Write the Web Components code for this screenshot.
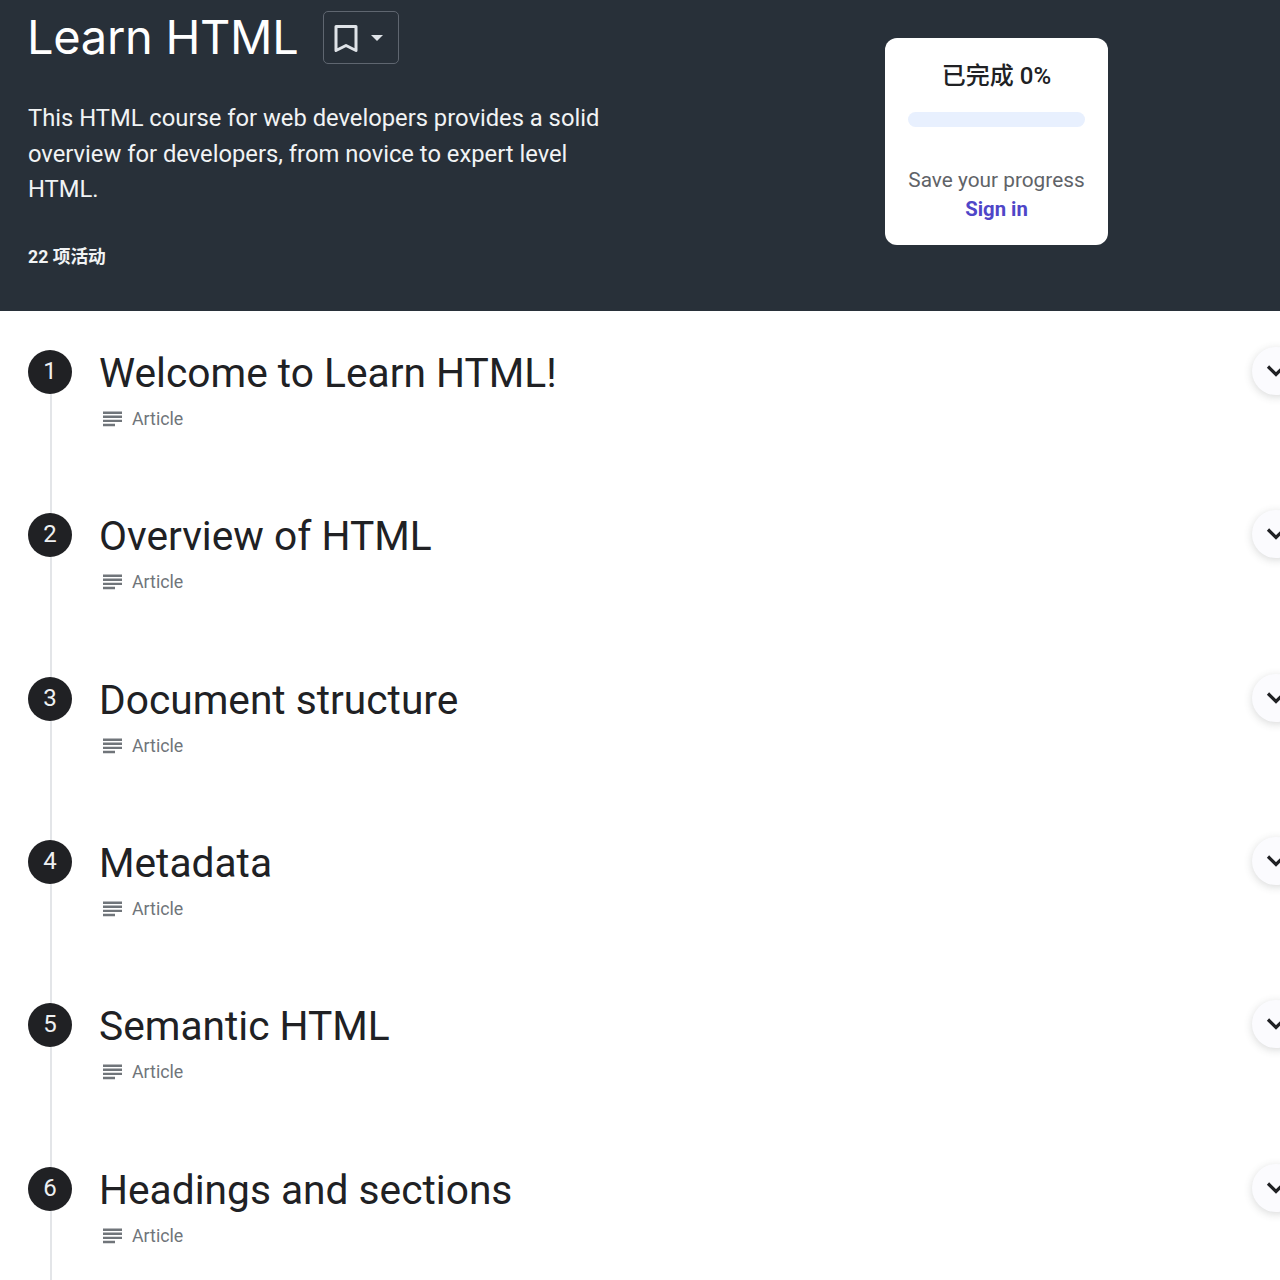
<!DOCTYPE html>
<html lang="en"><head><meta charset="utf-8"><title>Learn HTML</title>
<style>
html,body{margin:0;padding:0;background:#fff;overflow:hidden;height:1280px}
body{font-family:Roboto,"Noto Sans CJK SC",sans-serif;}
</style></head><body>
<course-page>
<course-hero slot="hero" heading="Learn HTML" count="22 项活动">This HTML course for web developers provides a solid overview for developers, from novice to expert level HTML.</course-hero>
<course-row n="1" heading="Welcome to Learn HTML!"></course-row>
<course-row n="2" heading="Overview of HTML"></course-row>
<course-row n="3" heading="Document structure"></course-row>
<course-row n="4" heading="Metadata"></course-row>
<course-row n="5" heading="Semantic HTML"></course-row>
<course-row n="6" heading="Headings and sections"></course-row>
</course-page>
<script>
class CoursePage extends HTMLElement{constructor(){super();this.attachShadow({mode:'open'}).innerHTML=`<style>:host{display:block;width:1280px;height:1280px;overflow:hidden}.rows{padding-top:39px}</style><slot name="hero"></slot><div class="rows"><slot></slot></div>`;}}
class ProgressCard extends HTMLElement{constructor(){super();this.attachShadow({mode:'open'}).innerHTML=`<style>
:host{display:flex;flex-direction:column;align-items:center;box-sizing:border-box;width:223px;height:207px;background:#fff;border-radius:12px;padding-top:23px;font-family:Roboto,"Noto Sans CJK SC",sans-serif}
.t{font-size:24px;line-height:30px;font-weight:500;color:#202124;white-space:nowrap}
.bar{width:177px;height:15px;border-radius:8px;background:#e8f0fe;margin-top:21px}
.s{font-size:20.8px;line-height:28px;color:#5f6368;margin-top:39px;white-space:nowrap}
.l{font-size:20.3px;line-height:30px;font-weight:700;color:#4f46c8}
</style><div class="t">已完成 0%</div><div class="bar"></div><div class="s">Save your progress</div><div class="l">Sign in</div>`;}}
class CourseHero extends HTMLElement{constructor(){super();this.attachShadow({mode:'open'}).innerHTML=`<style>
:host{display:flex;height:311px;background:#283039;color:#fff;box-sizing:border-box;position:relative;font-family:Roboto,"Noto Sans CJK SC",sans-serif}
.main{width:885px;box-sizing:border-box;padding:10px 0 0 27px;flex:none}
.top{display:flex;align-items:center;gap:24px;height:54px}
h1{margin:-2px 0 0;font-family:Inter,sans-serif;font-weight:400;font-size:47px;line-height:53px;letter-spacing:-.3px;white-space:nowrap}
.btn{box-sizing:border-box;width:76px;height:53px;border:1px solid #5f6670;border-radius:5px;display:flex;align-items:center;padding-left:9px;gap:11px;margin-top:1px}
p{margin:37px 0 0 1px;width:590px;font-size:23.75px;line-height:35.5px;color:#f1f3f4}
.c{margin:35px 0 0 1px;font-size:17.7px;line-height:28px;font-weight:700;color:#f1f3f4}
.card{margin-top:38px}
</style><div class="main"><div class="top"><h1></h1><div class="btn"><svg width="26" height="30" viewBox="0 0 26 30"><path d="M3 3.500h20v24l-10-5-10 5z" fill="none" stroke="#dfe3e8" stroke-width="3" stroke-linejoin="round"/></svg><svg width="14" height="8" viewBox="0 0 14 8"><path d="M1 1h12L7 7z" fill="#dfe3e8"/></svg></div></div><p><slot></slot></p><div class="c"></div></div><progress-card class="card"></progress-card>`;
this.shadowRoot.querySelector('h1').textContent=this.getAttribute('heading');this.shadowRoot.querySelector('.c').textContent=this.getAttribute('count');}}
class CourseRow extends HTMLElement{constructor(){super();this.attachShadow({mode:'open'}).innerHTML=`<style>
:host{display:block;height:163.35px;position:relative;font-family:Roboto,sans-serif}
.row{display:grid;grid-template-columns:44px 1fr;column-gap:28px;padding-left:28px;height:100%}
.n{width:44px;height:44px;border-radius:50%;background:#202124;color:#eef0f2;font-size:24px;font-weight:400;display:flex;align-items:center;justify-content:center;line-height:1;padding-bottom:2px;box-sizing:border-box;position:relative;z-index:1}
.line{position:absolute;left:50px;top:44px;bottom:-1px;width:2px;background:#e3e5e8}
h2{margin:0 0 0 -1px;font-weight:400;font-size:40.7px;line-height:46px;color:#202124;white-space:nowrap}
.m{display:flex;align-items:center;margin-top:10px;gap:8px;color:#70757a;font-size:17.8px;line-height:26px}
.go{width:48px;height:48px;border-radius:50%;background:#fbfbfe;box-shadow:0 2px 8px rgba(60,64,67,.2);display:flex;align-items:center;justify-content:center;position:absolute;left:1252px;top:-3px}
.go svg{flex:none}
</style><div class="line"></div><div class="row"><div class="n"></div><div><h2></h2><div class="m"><svg width="24" height="24" viewBox="0 0 24 24"><path d="M3 4.500h19v2.400H3zM3 8.600h19V11H3zM3 12.700h19v2.400H3zM3 16.800h12v2.400H3z" fill="#70757a"/></svg><span>Article</span></div></div></div><div class="go"><svg width="30" height="30" viewBox="0 0 30 30"><path d="M7 10.500l8 8 8-8" fill="none" stroke="#202124" stroke-width="3.2"/></svg></div>`;
this.shadowRoot.querySelector('.n').textContent=this.getAttribute('n');this.shadowRoot.querySelector('h2').textContent=this.getAttribute('heading');}}
customElements.define('course-page',CoursePage);customElements.define('progress-card',ProgressCard);customElements.define('course-hero',CourseHero);customElements.define('course-row',CourseRow);
</script></body></html>
